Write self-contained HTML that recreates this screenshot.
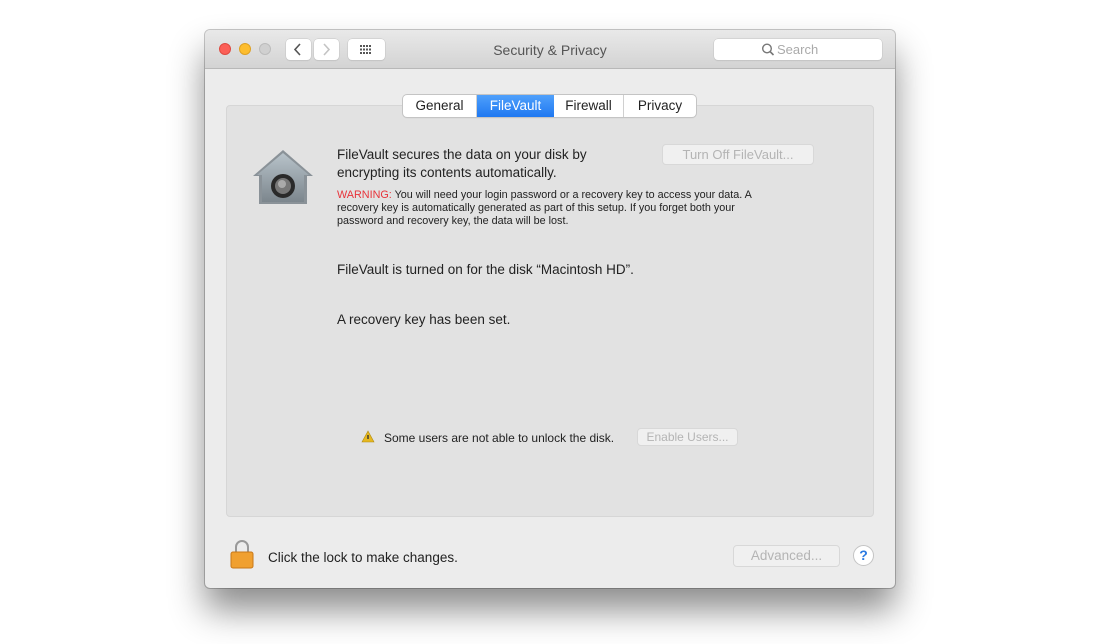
<!DOCTYPE html>
<html><head><style>
*{margin:0;padding:0;box-sizing:border-box}
body{width:1100px;height:644px;background:#fff;position:relative;overflow:hidden;font-family:"Liberation Sans",sans-serif;color:#222}
.win{position:absolute;left:205px;top:30px;width:690px;height:558px;background:#ececec;border-radius:5px;box-shadow:0 22px 35px rgba(0,0,0,.45),0 0 0 1px #c8c8c8;overflow:hidden}
.tb{position:absolute;left:0;top:0;width:690px;height:39px;background:linear-gradient(#e9e9e9,#d3d3d3);border-bottom:1px solid #b8b8b8}
.dot{position:absolute;top:13px;width:12px;height:12px;border-radius:50%}
.btn{position:absolute;background:#fff;border-radius:4px;box-shadow:0 0 0 .5px #c4c4c4,0 1px 1px rgba(0,0,0,.1)}
.a{position:absolute;white-space:nowrap}
.panel{position:absolute;left:21px;top:75px;width:648px;height:412px;background:#e2e2e2;border:1px solid #d6d6d6;border-radius:4px}
.tabs{position:absolute;left:198px;top:65px;height:22px;display:flex;background:#fff;border-radius:4px;box-shadow:0 0 0 1px #c4c4c4,0 1px 1px rgba(0,0,0,.15);font-size:13.5px;overflow:hidden}
.tabs div{text-align:center;line-height:22px;border-right:1px solid #d0d0d0}
.dis{position:absolute;background:#f0f0f0;border:1px solid #d8d8d8;border-radius:4px;color:#b4b4b4;font-size:12px;text-align:center}
</style></head><body>
<div class="win">
<div class="tb">
<div class="dot" style="left:14px;background:#fc5f57;border:1px solid #de4a41"></div>
<div class="dot" style="left:34px;background:#fdbd2e;border:1px solid #dea123"></div>
<div class="dot" style="left:54px;background:#d0d0d0;border:1px solid #bcbcbc"></div>
<div class="btn" style="left:81px;top:9px;width:25px;height:21px"><svg width="25" height="21"><path d="M14 5l-5 5.5 5 5.5" stroke="#555" stroke-width="1.6" fill="none"/></svg></div>
<div class="btn" style="left:109px;top:9px;width:25px;height:21px"><svg width="25" height="21"><path d="M10 5l5 5.5-5 5.5" stroke="#c4c4c4" stroke-width="1.6" fill="none"/></svg></div>
<div class="btn" style="left:143px;top:9px;width:37px;height:21px"><svg width="37" height="21"><g fill="#555"><rect x="12" y="6" width="2" height="2"/><rect x="15" y="6" width="2" height="2"/><rect x="18" y="6" width="2" height="2"/><rect x="21" y="6" width="2" height="2"/><rect x="12" y="9.5" width="2" height="2"/><rect x="15" y="9.5" width="2" height="2"/><rect x="18" y="9.5" width="2" height="2"/><rect x="21" y="9.5" width="2" height="2"/><rect x="12" y="13" width="2" height="2"/><rect x="15" y="13" width="2" height="2"/><rect x="18" y="13" width="2" height="2"/><rect x="21" y="13" width="2" height="2"/></g></svg></div>
<div class="a" style="left:0;width:690px;text-align:center;top:12px;font-size:14px;color:#555">Security &amp; Privacy</div>
<div class="btn" style="left:509px;top:9px;width:168px;height:21px"><svg width="20" height="21" style="position:absolute;left:43px;top:0"><circle cx="10" cy="9.5" r="4.3" stroke="#777" stroke-width="1.4" fill="none"/><path d="M13 12.5l3.5 3.5" stroke="#777" stroke-width="1.6"/></svg><span class="a" style="left:63px;top:3px;font-size:13px;color:#aaa">Search</span></div>
</div>
<div class="panel"></div>
<div class="tabs"><div style="width:74px">General</div><div style="width:77px;background:linear-gradient(#4fa0fb,#1f78f1);color:#fff;border-right:0">FileVault</div><div style="width:70px">Firewall</div><div style="width:72px;border-right:0">Privacy</div></div>
<svg class="a" style="left:44px;top:118px" width="68" height="60"><path d="M34 2L4 28h6v28h48V28h6z" fill="#8a9298"/><path d="M34 5L8 27h5v27h42V27h5z" fill="url(#g)"/><defs><linearGradient id="g" x1="0" y1="0" x2="0" y2="1"><stop offset="0" stop-color="#b8c3ca"/><stop offset="1" stop-color="#7c868d"/></linearGradient></defs><circle cx="34" cy="38" r="12" fill="#2a2a2a"/><circle cx="34" cy="38" r="8" fill="#777"/><circle cx="33" cy="36" r="4" fill="#aaa"/></svg>
<div class="a" style="left:132px;top:116px;font-size:13.5px;line-height:18px">FileVault secures the data on your disk by<br>encrypting its contents automatically.</div>
<div class="dis" style="left:457px;top:114px;width:152px;height:21px;line-height:19px;font-size:13px">Turn Off FileVault...</div>
<div class="a" style="left:132px;top:159px;font-size:10.8px;line-height:13px"><span style="color:#e8333a">WARNING:</span> You will need your login password or a recovery key to access your data. A<br>recovery key is automatically generated as part of this setup. If you forget both your<br>password and recovery key, the data will be lost.</div>
<div class="a" style="left:132px;top:232px;font-size:13.5px">FileVault is turned on for the disk “Macintosh HD”.</div>
<div class="a" style="left:132px;top:282px;font-size:13.5px">A recovery key has been set.</div>
<svg class="a" style="left:156px;top:400px" width="14" height="13"><path d="M7 1L1 12h12z" fill="#e6b820" stroke="#b08a10" stroke-width=".6"/><rect x="6.3" y="5" width="1.4" height="4" fill="#333"/></svg>
<div class="a" style="left:179px;top:401px;font-size:12px">Some users are not able to unlock the disk.</div>
<div class="dis" style="left:432px;top:398px;width:101px;height:18px;line-height:16px;font-size:12px">Enable Users...</div>
<svg class="a" style="left:25px;top:509px" width="24" height="30"><path d="M6 13V8a6 6 0 0112 0v5" stroke="#999" stroke-width="2" fill="none"/><rect x="1" y="13" width="22" height="16" rx="2" fill="#f0a030" stroke="#c87818"/></svg>
<div class="a" style="left:63px;top:520px;font-size:13.5px">Click the lock to make changes.</div>
<div class="dis" style="left:528px;top:515px;width:107px;height:22px;line-height:20px;font-size:13.5px">Advanced...</div>
<div class="a" style="left:648px;top:515px;width:21px;height:21px;border-radius:50%;background:#fff;border:1px solid #c4c4c4;color:#2a7ae2;font-size:14px;font-weight:bold;text-align:center;line-height:19px">?</div>
</div>
</body></html>
